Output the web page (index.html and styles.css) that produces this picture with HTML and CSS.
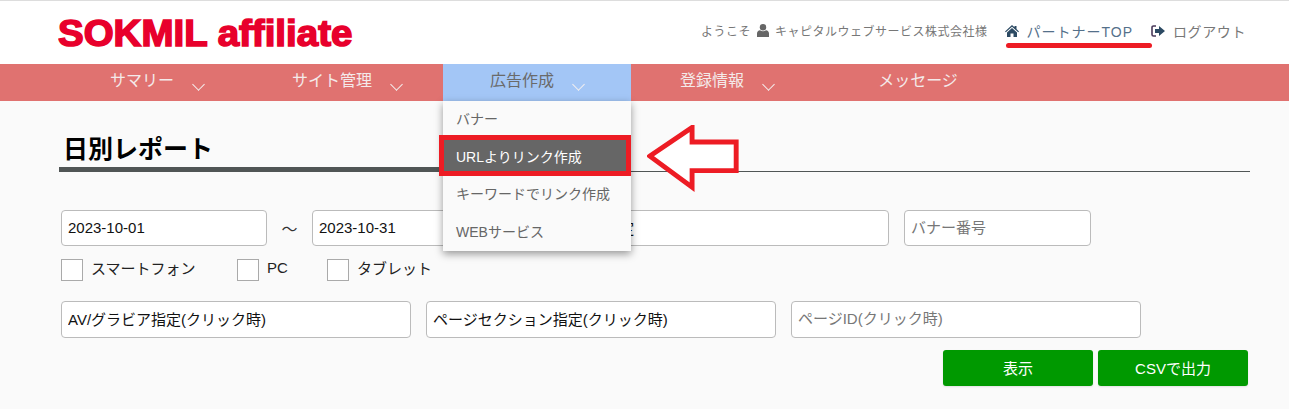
FILE: index.html
```html
<!DOCTYPE html>
<html lang="ja">
<head>
<meta charset="utf-8">
<title>日別レポート</title>
<link rel="stylesheet" href="styles.css">
</head>
<body>
<header class="top">
  <div class="logo">SOKMIL affiliate</div>
  <div class="account">
    <span class="welcome">ようこそ</span>
    <svg class="ico ico-user" viewBox="0 0 12 13"><circle cx="6" cy="3.2" r="3.2"/><path d="M0 13V9.5C0 7.6 1.4 6.4 3 6.2 3.8 6.9 4.9 7.3 6 7.3S8.200 6.900 9 6.200C10.600 6.400 12 7.600 12 9.500V13Z"/></svg>
    <span class="company">キャピタルウェブサービス株式会社様</span>
    <a class="link link-home">
      <svg class="ico ico-home" viewBox="0 0 14 12"><path d="M7 0 9.500 2.300V1H11.500V4.100L14 6.400 13.200 7.300 7 1.700 .8 7.300 0 6.400Z"/><path d="M7 3 12 7.400V12H8.500V8.500H5.500V12H2V7.400Z"/></svg>
      <span>パートナーTOP</span>
    </a>
    <a class="link link-out">
      <svg class="ico ico-out" viewBox="0 0 14 12"><path class="door" d="M5 1H2.500C1.600 1 1 1.600 1 2.500V9.500C1 10.400 1.600 11 2.500 11H5" /><path d="M8 1 14 6 8 11V8H4V4H8Z"/></svg>
      <span>ログアウト</span>
    </a>
  </div>
</header>
<nav class="nav">
  <div class="nav-item"><span>サマリー</span><i class="chev"></i></div>
  <div class="nav-item"><span>サイト管理</span><i class="chev"></i></div>
  <div class="nav-item is-active"><span>広告作成</span><i class="chev"></i>
    <ul class="menu">
      <li>バナー</li>
      <li class="is-current">URLよりリンク作成</li>
      <li>キーワードでリンク作成</li>
      <li>WEBサービス</li>
    </ul>
  </div>
  <div class="nav-item"><span>登録情報</span><i class="chev"></i></div>
  <div class="nav-item"><span>メッセージ</span></div>
</nav>
<main class="content">
  <h1 class="title"><span>日別レポート</span></h1>
  <form class="form">
    <div class="row row-dates">
      <input class="field w-date" type="text" value="2023-10-01">
      <span class="tilde">～</span>
      <input class="field w-date" type="text" value="2023-10-31">
      <input class="field w-mid" type="text" value="サイトID 指定">
      <input class="field w-num" type="text" placeholder="バナー番号">
    </div>
    <div class="row row-checks">
      <label class="check c-1"><i class="box"></i><span class="check-text">スマートフォン</span></label>
      <label class="check c-2"><i class="box"></i><span class="check-text">PC</span></label>
      <label class="check"><i class="box"></i><span class="check-text">タブレット</span></label>
    </div>
    <div class="row row-selects">
      <input class="field w-sel" type="text" value="AV/グラビア指定(クリック時)">
      <input class="field w-sel" type="text" value="ページセクション指定(クリック時)">
      <input class="field w-sel" type="text" placeholder="ページID(クリック時)">
    </div>
    <div class="row row-buttons">
      <button class="btn" type="button">表示</button>
      <button class="btn" type="button">CSVで出力</button>
    </div>
  </form>
</main>
<div class="mark-line"></div>
<div class="mark-box"></div>
<svg class="mark-arrow" viewBox="0 0 100 70" preserveAspectRatio="none"><path d="M3 32 46 2.500V17.500H91V47H46V64Z"/></svg>
</body>
</html>
```
FILE: styles.css
```css
* { box-sizing: border-box; }
html, body { margin: 0; padding: 0; }
body {
  width: 1289px;
  height: 409px;
  overflow: hidden;
  background: #fafafa;
  position: relative;
  font-family: "Liberation Sans", "Noto Sans CJK JP", sans-serif;
  color: #111;
}
.top {
  height: 64px;
  background: #fff;
  border-top: 1px solid #ddd;
  display: flex;
  justify-content: space-between;
  align-items: center;
  padding: 0 43px 0 58px;
}
.logo {
  font-size: 37px;
  font-weight: 700;
  line-height: 40px;
  color: #e8002c;
  -webkit-text-stroke: 1.6px #e8002c;
  white-space: nowrap;
  margin-top: 3px;
  transform: scaleX(1.04);
  transform-origin: left center;
}
.account {
  display: flex;
  align-items: center;
  font-size: 12px;
  color: #777;
  letter-spacing: .5px;
  margin-top: -4px;
}
.ico { display: block; fill: currentColor; flex: none; }
.ico-user { width: 12px; height: 13px; margin: 0 6px 0 6px; color: #666; }
.ico-home { width: 14px; height: 12px; margin-right: 7px; color: #2c4a63; }
.ico-out { width: 14px; height: 12px; margin-right: 8px; color: #2c4a63; }
.door { fill: none; stroke: #4a3a5a; stroke-width: 1.6; }
.link { display: flex; align-items: center; font-size: 14px; letter-spacing: 1px; color: #54708a; }
.link-home { margin-left: 18px; }
.link-out { margin-left: 18px; color: #777; letter-spacing: .6px; }
.nav {
  height: 37px;
  background: #e07270;
  display: flex;
  gap: 2px;
  padding-left: 63px;
}
.nav-item {
  width: 188px;
  display: flex;
  justify-content: center;
  align-items: center;
  gap: 17px;
  position: relative;
  font-size: 16px;
  color: #f4eaea;
}
.nav-item span { margin-bottom: 7px; margin-left: 2px; }
.chev {
  width: 9px;
  height: 9px;
  border-right: 1px solid #f4f0f0;
  border-bottom: 1px solid #f4f0f0;
  transform: rotate(45deg);
  margin: 4px 3px 0 3px;
}
.is-active { background: #a3c6f6; color: #6a6a6a; }
.menu {
  position: absolute;
  left: 0;
  top: 37px;
  width: 188px;
  margin: 0;
  padding: 0;
  list-style: none;
  background: #fafafa;
  box-shadow: 0 3px 8px rgba(0,0,0,.4);
  font-size: 14px;
  color: #666;
  z-index: 2;
}
.menu li { height: 37.500px; line-height: 36px; padding-left: 13px; }
.menu .is-current { background: #666; color: #fff; }
.content { padding: 0 39px 0 59px; }
.title {
  margin: 30px 0 0;
  height: 41px;
  border-bottom: 1px solid #505555;
  font-size: 25px;
  line-height: 37px;
  font-weight: 700;
  color: #000;
  position: relative;
  padding-left: 4px;
}
.title::after {
  content: "";
  position: absolute;
  left: 0;
  bottom: -1px;
  width: 400px;
  height: 5px;
  background: #505555;
}
.form { padding-left: 2px; }
.row { display: flex; }
.row-dates { margin-top: 38px; align-items: center; }
.field {
  display: block;
  height: 36px;
  border: 1px solid #bbb;
  border-radius: 4px;
  background: #fff;
  padding: 0 6px 2px;
  font: inherit;
  font-size: 15px;
  color: #111;
  outline: none;
}
.field::placeholder { color: #777; opacity: 1; }
.w-date { width: 206px; }
.w-mid { width: 356px; margin-left: 15px; }
.w-num { width: 187px; margin-left: 15px; }
.tilde { width: 45px; text-align: center; font-size: 16px; color: #333; }
.row-checks { margin-top: 13px; height: 22px; align-items: center; }
.check { display: flex; align-items: center; font-size: 15px; color: #222; }
.check-text { margin-bottom: 5px; }
.box { width: 22px; height: 22px; background: #fff; border: 1px solid #aaa; margin-right: 8px; }
.c-1 { width: 176px; }
.c-2 { width: 90px; }
.row-selects { margin-top: 20px; gap: 15px; }
.w-sel { width: 350px; height: 37px; }
.row-buttons { margin-top: 12px; justify-content: flex-end; gap: 5px; padding-right: 2px; }
.btn {
  width: 150px;
  height: 36px;
  border: 0;
  border-radius: 3px;
  background: #009900;
  color: #fff;
  font: inherit;
  font-size: 15px;
  padding-bottom: 3px;
  box-shadow: 0 1px 2px rgba(0,0,0,.1);
}
.mark-line {
  position: absolute;
  left: 1006px;
  top: 43px;
  width: 146px;
  height: 5px;
  border-radius: 3px;
  background: #ed1c24;
}
.mark-box {
  position: absolute;
  left: 439px;
  top: 135px;
  width: 192px;
  height: 41px;
  border: 5px solid #ed1c24;
  z-index: 3;
}
.mark-arrow {
  position: absolute;
  left: 647px;
  top: 125px;
  width: 98px;
  height: 68px;
  z-index: 3;
  fill: #fff;
  stroke: #ed1c24;
  stroke-width: 5;
}
```
